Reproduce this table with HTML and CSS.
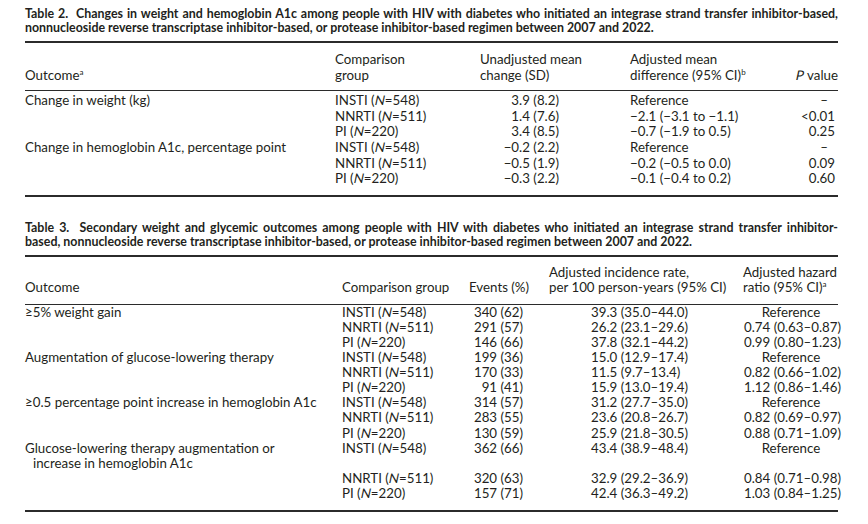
FILE: index.html
```html
<!DOCTYPE html>
<html lang="en">
<head>
  <meta charset="UTF-8">
  <title>Tables 2 and 3</title>
  <link rel="stylesheet" href="styles.css">
</head>
<body>
  <div class="page">
    <!-- Table 2 -->
    <section class="block">
      <p class="caption"><span class="full">Table 2.&nbsp; Changes in weight and hemoglobin A1c among people with HIV with diabetes who initiated an integrase strand transfer inhibitor-based,</span>nonnucleoside reverse transcriptase inhibitor-based, or protease inhibitor-based regimen between 2007 and 2022.</p>
      <table class="data t2">
        <colgroup>
          <col class="c1"><col class="c2"><col class="c3"><col class="c4"><col class="c5">
        </colgroup>
        <thead>
          <tr>
            <th>Outcome<sup>a</sup></th>
            <th>Comparison<br>group</th>
            <th>Unadjusted mean<br>change (SD)</th>
            <th>Adjusted mean<br>difference (95% CI)<sup>b</sup></th>
            <th class="right"><i>P</i> value</th>
          </tr>
        </thead>
        <tbody>
          <tr>
            <td>Change in weight (kg)</td>
            <td>INSTI (<i>N</i>=548)<br>NNRTI (<i>N</i>=511)<br>PI (<i>N</i>=220)</td>
            <td class="mean">3.9 (8.2)<br>1.4 (7.6)<br>3.4 (8.5)</td>
            <td>Reference<br>−2.1 (−3.1 to −1.1)<br>−0.7 (−1.9 to 0.5)</td>
            <td class="pval"><span class="dash">–</span><br>&lt;0.01<br>0.25</td>
          </tr>
          <tr>
            <td>Change in hemoglobin A1c, percentage point</td>
            <td>INSTI (<i>N</i>=548)<br>NNRTI (<i>N</i>=511)<br>PI (<i>N</i>=220)</td>
            <td class="mean">−0.2 (2.2)<br>−0.5 (1.9)<br>−0.3 (2.2)</td>
            <td>Reference<br>−0.2 (−0.5 to 0.0)<br>−0.1 (−0.4 to 0.2)</td>
            <td class="pval"><span class="dash">–</span><br>0.09<br>0.60</td>
          </tr>
        </tbody>
      </table>
    </section>

    <!-- Table 3 -->
    <section class="block">
      <p class="caption"><span class="full">Table 3.&nbsp; Secondary weight and glycemic outcomes among people with HIV with diabetes who initiated an integrase strand transfer inhibitor-</span>based, nonnucleoside reverse transcriptase inhibitor-based, or protease inhibitor-based regimen between 2007 and 2022.</p>
      <table class="data t3">
        <colgroup>
          <col class="c1"><col class="c2"><col class="c3"><col class="c4"><col class="c5">
        </colgroup>
        <thead>
          <tr>
            <th>Outcome</th>
            <th>Comparison group</th>
            <th>Events (%)</th>
            <th>Adjusted incidence rate,<br>per 100 person-years (95% CI)</th>
            <th>Adjusted hazard<br>ratio (95% CI)<sup>a</sup></th>
          </tr>
        </thead>
        <tbody>
          <tr>
            <td>≥5% weight gain</td>
            <td>INSTI (<i>N</i>=548)<br>NNRTI (<i>N</i>=511)<br>PI (<i>N</i>=220)</td>
            <td class="events">340 (62)<br>291 (57)<br>146 (66)</td>
            <td class="rate">39.3 (35.0–44.0)<br>26.2 (23.1–29.6)<br>37.8 (32.1–44.2)</td>
            <td class="hr">Reference<br>0.74 (0.63–0.87)<br>0.99 (0.80–1.23)</td>
          </tr>
          <tr>
            <td>Augmentation of glucose-lowering therapy</td>
            <td>INSTI (<i>N</i>=548)<br>NNRTI (<i>N</i>=511)<br>PI (<i>N</i>=220)</td>
            <td class="events">199 (36)<br>170 (33)<br>91 (41)</td>
            <td class="rate">15.0 (12.9–17.4)<br>11.5 (9.7–13.4)<br>15.9 (13.0–19.4)</td>
            <td class="hr">Reference<br>0.82 (0.66–1.02)<br>1.12 (0.86–1.46)</td>
          </tr>
          <tr>
            <td>≥0.5 percentage point increase in hemoglobin A1c</td>
            <td>INSTI (<i>N</i>=548)<br>NNRTI (<i>N</i>=511)<br>PI (<i>N</i>=220)</td>
            <td class="events">314 (57)<br>283 (55)<br>130 (59)</td>
            <td class="rate">31.2 (27.7–35.0)<br>23.6 (20.8–26.7)<br>25.9 (21.8–30.5)</td>
            <td class="hr">Reference<br>0.82 (0.69–0.97)<br>0.88 (0.71–1.09)</td>
          </tr>
          <tr>
            <td><span class="hang">Glucose-lowering therapy augmentation or increase in hemoglobin A1c</span></td>
            <td>INSTI (<i>N</i>=548)<br><br>NNRTI (<i>N</i>=511)<br>PI (<i>N</i>=220)</td>
            <td class="events">362 (66)<br><br>320 (63)<br>157 (71)</td>
            <td class="rate">43.4 (38.9–48.4)<br><br>32.9 (29.2–36.9)<br>42.4 (36.3–49.2)</td>
            <td class="hr">Reference<br><br>0.84 (0.71–0.98)<br>1.03 (0.84–1.25)</td>
          </tr>
        </tbody>
      </table>
    </section>
  </div>
</body>
</html>
```

FILE: styles.css
```css
body {
  margin: 0;
  background: #fff;
  color: #231f20;
  font-family: Lato, "Open Sans", sans-serif;
}

.page {
  padding: 7px 30px 0 25px;
}

.block {
  width: 813px;
}

.block + .block {
  margin-top: 24px;
}

.caption {
  margin: 0;
  font-size: 12.4px;
  line-height: 14px;
  font-weight: bold;
  white-space: nowrap;
}

.caption .full {
  display: block;
  text-align: justify;
  text-align-last: justify;
  white-space: normal;
}

.data {
  width: 813px;
  table-layout: fixed;
  border-collapse: collapse;
  font-size: 13.3px;
  line-height: 15.6px;
  border-top: 2px solid #2b2b2b;
  border-bottom: 2px solid #2b2b2b;
  margin-top: 6px;
}

.data th {
  font-weight: normal;
  text-align: left;
  vertical-align: bottom;
  padding: 9px 0 7px;
  white-space: nowrap;
  border-bottom: 1.5px solid #2b2b2b;
}

.data td {
  vertical-align: top;
  padding: 0;
  white-space: nowrap;
}

.data tbody tr:first-child td {
  padding-top: 2px;
}

.data tbody tr:last-child td {
  padding-bottom: 8px;
}

sup {
  font-size: 8px;
  line-height: 0;
  position: relative;
  top: -5px;
  vertical-align: baseline;
}

/* slanted letter for N and P */
i {
  display: inline-block;
  font-style: normal;
  transform: skewX(-12deg);
}

.right {
  text-align: right !important;
}

/* table 2 columns */
.t2 .c1 { width: 310px; }
.t2 .c2 { width: 145px; }
.t2 .c3 { width: 150px; }
.t2 .c4 { width: 160px; }
.t2 .c5 { width: 48px; }

.t2 .mean {
  text-align: right;
  padding-right: 71px;
}

.t2 .pval {
  text-align: right;
  padding-right: 3px;
}

.t2 .dash {
  margin-right: 7px;
}

/* table 3 columns */
.t3 {
  line-height: 15.1px;
}

.t3 th {
  line-height: 15px;
  padding: 8px 0 9px;
}

.t3 tbody tr:first-child td {
  padding-top: 0;
}

.t3 tbody tr:last-child td {
  padding-bottom: 9px;
}

.t3 .c1 { width: 317px; }
.t3 .c2 { width: 127px; }
.t3 .c3 { width: 80px; }
.t3 .c4 { width: 194px; }
.t3 .c5 { width: 95px; }

.t3 .events {
  text-align: right;
  padding-right: 26px;
}

.t3 .rate {
  padding-left: 42px;
}

.t3 .hr {
  text-align: center;
  padding-left: 1px;
}

.hang {
  display: block;
  white-space: normal;
  width: 265px;
  padding-left: 8px;
  text-indent: -8px;
}
```
